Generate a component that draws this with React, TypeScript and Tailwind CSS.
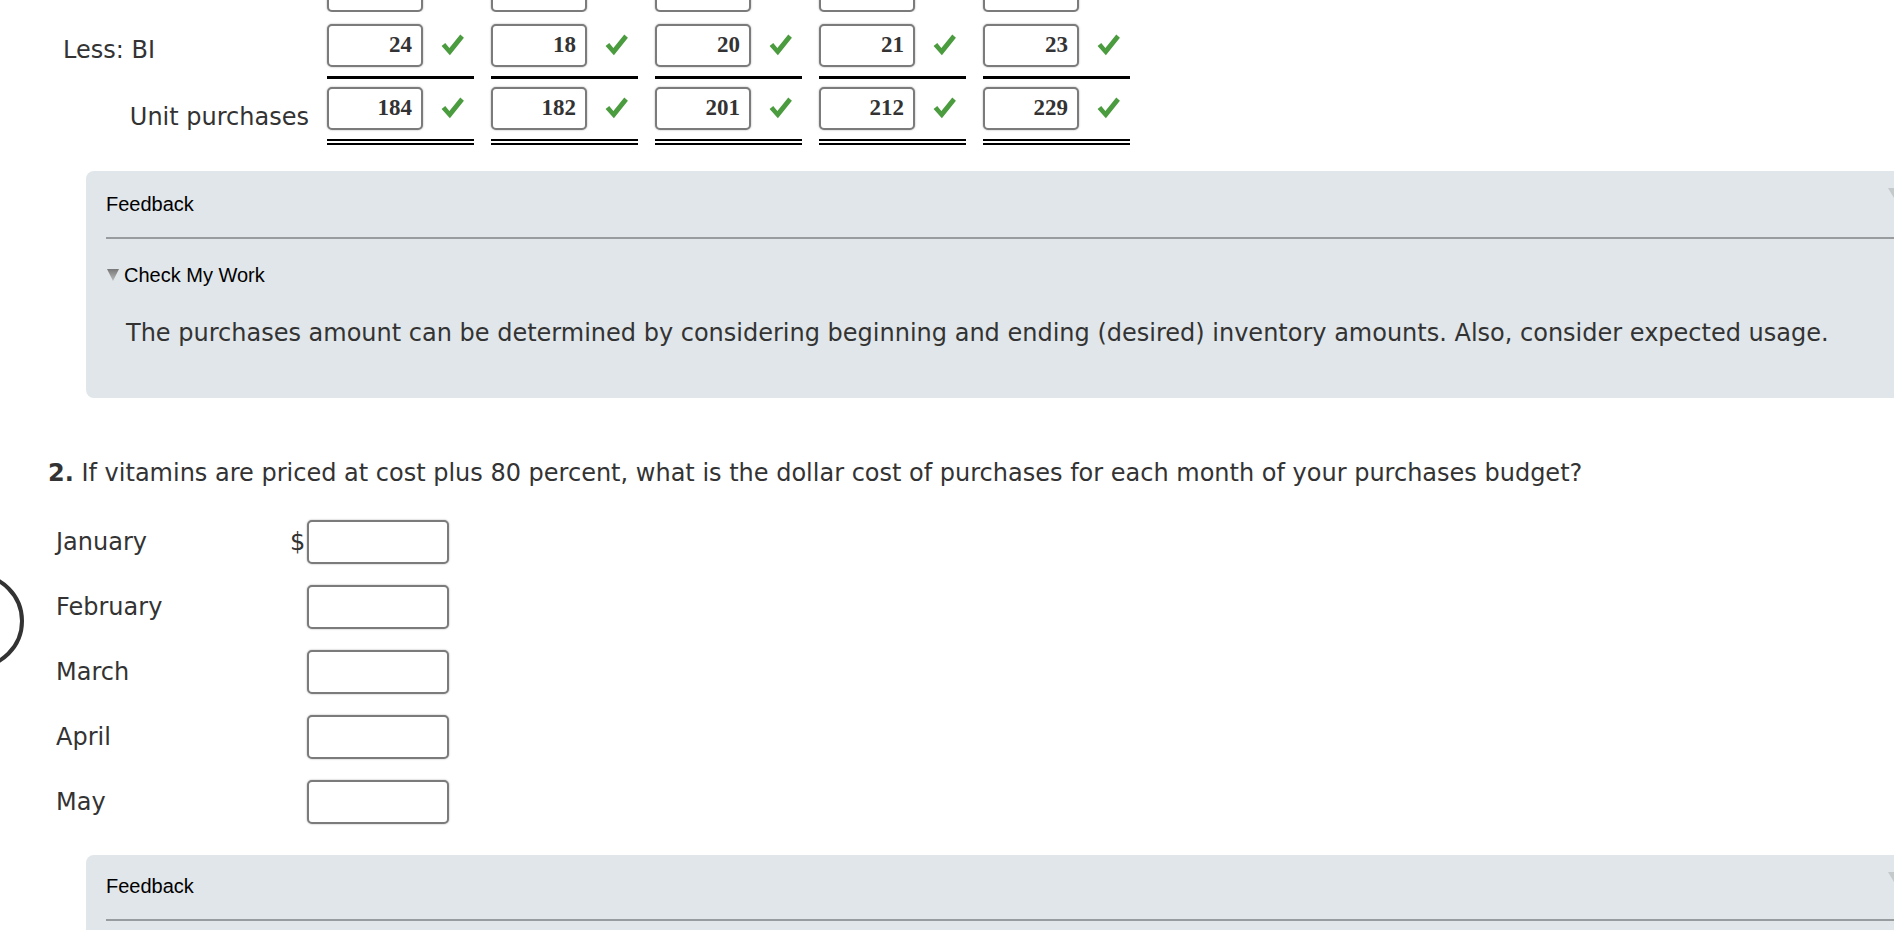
import React from "react";

const row0 = ["", "", "", "", ""];
const row1 = ["24", "18", "20", "21", "23"];
const row2 = ["184", "182", "201", "212", "229"];

function Check() {
  return (
    <svg width="27" height="27" viewBox="0 0 26 26">
      <path d="M2.5 13.5 L6 10.5 L10 15.5 L20.5 2.5 L24 5.5 L10.5 22.5 Z" fill="#4b9b3f" />
    </svg>
  );
}

function Box({ v }: { v: string }) {
  return (
    <div className="w-[96px] h-[43px] shrink-0 border-2 border-[#7b7b7b] rounded-[5px] bg-white shadow-[0_0_2px_rgba(0,0,0,0.35)] flex items-center justify-end pr-[9px] font-['Liberation_Serif'] font-bold text-[23px] text-[#333]">
      {v}
    </div>
  );
}

function Tri() {
  return (
    <svg width="14" height="14" viewBox="0 0 14 14" className="mr-[4px]">
      <defs>
        <linearGradient id="tg" x1="0" y1="0" x2="0" y2="1">
          <stop offset="0" stopColor="#777" />
          <stop offset="1" stopColor="#bbb" />
        </linearGradient>
      </defs>
      <polygon points="1,1 13,1 7,13" fill="url(#tg)" />
    </svg>
  );
}

function Feedback({ children, bottom }: { children?: React.ReactNode; bottom?: boolean }) {
  return (
    <div className={bottom ? "ml-[86px] mt-[31px] w-[1830px] bg-[#e0e6e9] rounded-[8px] pl-[20px] pt-[19px] pb-[40px] relative" : "ml-[86px] mt-[26px] w-[1830px] bg-[#e0e6e9] rounded-[8px] pl-[20px] pt-[21px] pb-[51px] relative"}>
      <div className="absolute left-[1802px] top-[17px] w-0 h-0 border-l-[6px] border-r-[6px] border-t-[10px] border-l-transparent border-r-transparent border-t-[#c4c9cc]" />
      <div className="font-['Liberation_Sans'] text-[20px] leading-[24px] text-black">Feedback</div>
      <div className="mt-[21px] h-[2px] bg-[#999c9f]" />
      {children}
    </div>
  );
}

export default function App() {
  return (
    <div className="w-[1894px] h-[930px] overflow-hidden bg-white relative font-['DejaVu_Sans'] text-[#333]">
      <div className="absolute left-[-72px] top-[573px] w-[96px] h-[96px] rounded-full border-[4px] border-[#333]" />

      {/* partial top row */}
      <div className="flex h-[12px] overflow-hidden items-end">
        <div className="w-[327px] shrink-0" />
        <div className="flex gap-[17px]">
          {row0.map((v, i) => (
            <div key={i} className="w-[147px] flex">
              <Box v={v} />
            </div>
          ))}
        </div>
      </div>

      {/* Less: BI */}
      <div className="flex mt-[12px]">
        <div className="w-[327px] shrink-0 pl-[63px] pt-[12px] text-[24px] leading-[28px]">Less: BI</div>
        <div className="flex gap-[17px]">
          {row1.map((v, i) => (
            <div key={i} className="w-[147px] border-b-[3px] border-black pb-[9px]">
              <div className="flex items-center">
                <Box v={v} />
                <div className="ml-[16px]">
                  <Check />
                </div>
              </div>
            </div>
          ))}
        </div>
      </div>

      {/* Unit purchases */}
      <div className="flex mt-[8px]">
        <div className="w-[327px] shrink-0 pr-[18px] pt-[16px] text-right text-[24px] leading-[28px]">Unit purchases</div>
        <div className="flex gap-[17px]">
          {row2.map((v, i) => (
            <div key={i} className="w-[147px] border-b-[6px] border-double border-black pb-[9px]">
              <div className="flex items-center">
                <Box v={v} />
                <div className="ml-[16px]">
                  <Check />
                </div>
              </div>
            </div>
          ))}
        </div>
      </div>

      <Feedback>
        <div className="mt-[24px] flex items-center font-['Liberation_Sans'] text-[20px] leading-[24px] text-black">
          <Tri />
          Check My Work
        </div>
        <p className="mt-[32px] pl-[20px] text-[24px] leading-[28px] text-[#333]">
          The purchases amount can be determined by considering beginning and ending (desired) inventory amounts. Also, consider expected usage.
        </p>
      </Feedback>

      <p className="mt-[61px] pl-[48px] text-[24px] leading-[28px] text-[#333]">
        <span className="font-bold">2.</span> If vitamins are priced at cost plus 80 percent, what is the dollar cost of purchases for each month of your purchases budget?
      </p>

      <div className="mt-[33px] flex flex-col gap-[21px]">
        {["January", "February", "March", "April", "May"].map((m, i) => (
          <div key={m} className="flex items-center h-[44px]">
            <div className="w-[290px] shrink-0 pl-[56px] text-[24px] leading-[28px]">{m}</div>
            <div className="w-[17px] shrink-0 text-[24px] leading-[28px]">{i === 0 ? "$" : ""}</div>
            <div className="w-[142px] h-[44px] border-2 border-[#7b7b7b] rounded-[5px] bg-white shadow-[0_0_2px_rgba(0,0,0,0.35)]" />
          </div>
        ))}
      </div>

      <Feedback bottom />
    </div>
  );
}
